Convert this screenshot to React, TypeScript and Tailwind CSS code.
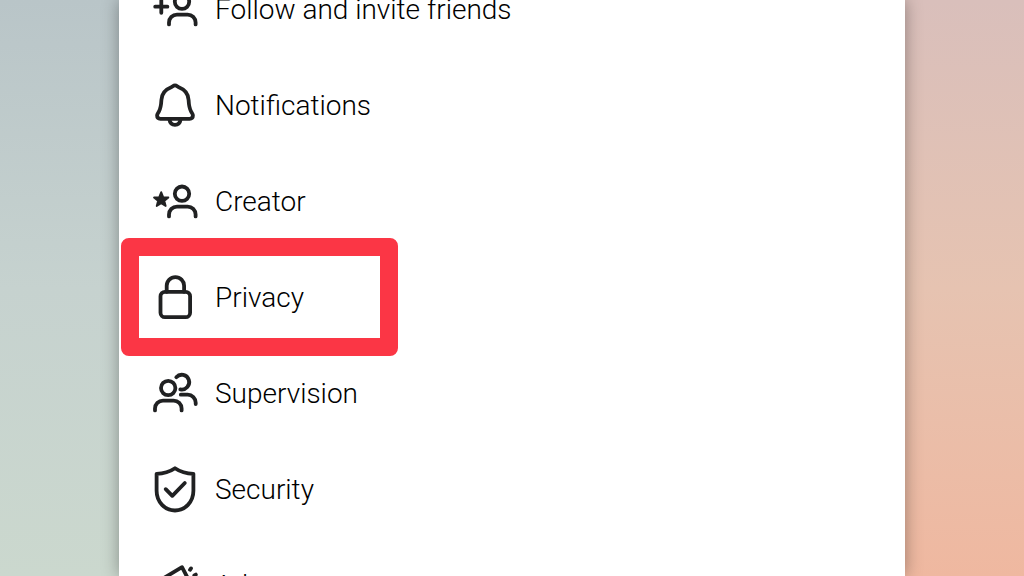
import type { ReactNode } from "react";

type Item = { label: string; icon: ReactNode; highlighted?: boolean };

const person = (
  <>
    <circle cx="31" cy="16.7" r="7.2" />
    <path d="M18 39.4v-1.8a8 8 0 0 1 8-8h10.6a8 8 0 0 1 8 8v1.8" />
  </>
);

const items: Item[] = [
  {
    label: "Follow and invite friends",
    icon: (
      <>
        {person}
        <path d="M4.2 21.7h12.2M10.3 15.6v12.2" />
      </>
    ),
  },
  {
    label: "Notifications",
    icon: (
      <>
        <path d="M24 4.4c-1.7 0-2.7 1.5-4.3 2.1C14 8.7 10.7 13 10.4 19c-.3 6-.8 8.7-2.6 11.7-1.1 1.8-1.7 2.3-1.7 3.9 0 2 1.4 3.2 3.3 3.2h29.2c1.9 0 3.3-1.2 3.3-3.2 0-1.6-.6-2.1-1.7-3.9-1.8-3-2.3-5.7-2.6-11.7C37.3 13 34 8.7 28.3 6.5 26.7 5.9 25.7 4.4 24 4.4z" />
        <path d="M18.4 38.5c.5 3.2 2.6 5.3 5.6 5.3s5.1-2.1 5.6-5.3" />
      </>
    ),
  },
  {
    label: "Creator",
    icon: (
      <>
        {person}
        <path
          d="M10.2 15.2l2 4.9 5.2.4-4 3.4 1.3 5.1-4.5-2.8-4.5 2.8 1.3-5.1-4-3.4 5.2-.4z"
          fill="currentColor"
          strokeWidth="1.8"
        />
      </>
    ),
  },
  {
    label: "Privacy",
    highlighted: true,
    icon: (
      <>
        <rect x="9.5" y="18.8" width="29.6" height="25.4" rx="4.5" />
        <path d="M15.7 18.8v-6a8.7 8.7 0 0 1 17.4 0v6" />
      </>
    ),
  },
  {
    label: "Supervision",
    icon: (
      <>
        <circle cx="17.2" cy="19" r="7.2" />
        <path d="M4 41.4v-1.8a8 8 0 0 1 8-8h10.6a8 8 0 0 1 8 8v1.8" />
        <path d="M25.3 8.2a7.4 7.4 0 1 1 4 12.2" />
        <path d="M29.8 25.7h6.9a8 8 0 0 1 8 8v1.4" />
      </>
    ),
  },
  {
    label: "Security",
    icon: (
      <>
        <path d="M24 3.2C19 6.6 13.5 8.6 5.6 8.8v17C5.6 37 14 45.5 24 45.5S42.4 37 42.4 25.8v-17C34.5 8.6 29 6.6 24 3.2z" />
        <path d="M14.7 24.2l6.6 6.6L33.8 18" />
      </>
    ),
  },
  {
    label: "Ads",
    icon: (
      <>
        <path d="M31 6.2L7.5 20.2a3.5 3.5 0 0 0-1.3 4.8l3.5 6a3.5 3.5 0 0 0 4.8 1.3L42 27z" />
        <path d="M16 32l2.5 7a4 4 0 0 0 7.5-3l-2-6" />
        <path d="M39 8.8l1-1.4M43.3 14.4l1.5-.8" />
      </>
    ),
  },
];

function MenuRow({ label, icon, highlighted }: Item) {
  return (
    <li className="relative">
      <a href="#" className="flex h-24 items-center gap-4 pl-8">
        <svg
          viewBox="0 0 48 48"
          className="size-12 shrink-0"
          fill="none"
          stroke="currentColor"
          strokeWidth="3.8"
          strokeLinecap="round"
          strokeLinejoin="round"
          aria-hidden="true"
        >
          {icon}
        </svg>
        <span className="pt-0.5 text-[28px] leading-8 font-light whitespace-nowrap text-black">{label}</span>
      </a>
      {highlighted && (
        <div className="pointer-events-none absolute -inset-y-[11px] left-[2px] w-[277px] rounded-lg border-[18px] border-[#fb3645]" />
      )}
    </li>
  );
}

export default function App() {
  return (
    <div className="flex h-screen overflow-hidden font-['Roboto',sans-serif] text-[#202122]">
      <div className="w-[119px] shrink-0 bg-linear-to-b from-[#b9c5c8] via-[#c6d2cf] to-[#cbd8ce]" />
      <main className="relative min-w-0 flex-1 bg-white shadow-[0_0_16px_rgba(0,0,0,0.35)]">
        <nav aria-label="Settings">
          <ul className="-mt-[39px]">
            {items.map((item) => (
              <MenuRow key={item.label} {...item} />
            ))}
          </ul>
        </nav>
      </main>
      <div className="w-[119px] shrink-0 bg-linear-to-b from-[#d9bfbb] via-[#e6c3b1] to-[#efb8a0]" />
    </div>
  );
}
